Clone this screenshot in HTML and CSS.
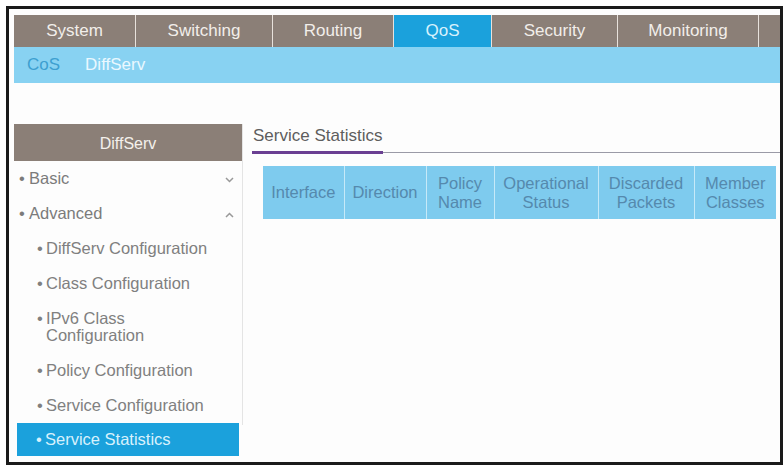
FILE: index.html
```html
<!DOCTYPE html>
<html lang="en">
<head>
    <meta charset="UTF-8">
    <title>QoS - DiffServ - Service Statistics</title>
    <link rel="stylesheet" href="styles.css">
</head>
<body>
    <div class="frame">
        <div class="tabs">
            <div class="tab tab-system">System</div>
            <div class="tab tab-switching">Switching</div>
            <div class="tab tab-routing">Routing</div>
            <div class="tab tab-qos active">QoS</div>
            <div class="tab tab-security">Security</div>
            <div class="tab tab-monitoring">Monitoring</div>
            <div class="tab tab-more"></div>
        </div>
        <div class="subnav">
            <span class="sub-link">CoS</span>
            <span class="sub-link current">DiffServ</span>
        </div>

        <div class="main">
            <div class="sidebar">
                <div class="side-head">DiffServ</div>
                <div class="side-item">
                    <span><span class="dot">&bull;</span>Basic</span>
                    <svg class="chev" width="9" height="6" viewBox="0 0 9 6"><path d="M1 1 L4.5 4.5 L8 1" fill="none" stroke="#999" stroke-width="1.5"/></svg>
                </div>
                <div class="side-item">
                    <span><span class="dot">&bull;</span>Advanced</span>
                    <svg class="chev" width="9" height="6" viewBox="0 0 9 6"><path d="M1 5 L4.5 1.5 L8 5" fill="none" stroke="#999" stroke-width="1.5"/></svg>
                </div>
                <div class="side-item sub"><span class="dot">&bull;</span><span>DiffServ Configuration</span></div>
                <div class="side-item sub"><span class="dot">&bull;</span><span>Class Configuration</span></div>
                <div class="side-item sub two"><span class="dot">&bull;</span><span>IPv6 Class<br>Configuration</span></div>
                <div class="side-item sub"><span class="dot">&bull;</span><span>Policy Configuration</span></div>
                <div class="side-item sub"><span class="dot">&bull;</span><span>Service Configuration</span></div>
                <div class="side-item sub selected"><span class="dot">&bull;</span><span>Service Statistics</span></div>
            </div>

            <div class="content">
                <div class="page-title"><span>Service Statistics</span></div>
                <table class="stats">
                    <thead>
                        <tr>
                            <th class="c-if">Interface</th>
                            <th class="c-dir">Direction</th>
                            <th class="c-pol">Policy<br>Name</th>
                            <th class="c-op">Operational<br>Status</th>
                            <th class="c-dis">Discarded<br>Packets</th>
                            <th class="c-mem">Member<br>Classes</th>
                        </tr>
                    </thead>
                    <tbody></tbody>
                </table>
            </div>
        </div>
    </div>
</body>
</html>
```

FILE: styles.css
```css
body {
    margin: 0;
    background: #fff;
    font-family: 'Liberation Sans', Arial, sans-serif;
    color: #777;
}

.frame {
    box-sizing: border-box;
    width: 777px;
    height: 459px;
    margin: 6px 0 0 6px;
    border: 3px solid #1a1a1a;
    padding: 6px 0 0 5px;
    overflow: hidden;
    background: #fdfdfd;
}

.tabs {
    display: flex;
    height: 32px;
    background: #8b7f77;
}

.tab {
    box-sizing: border-box;
    border-right: 1px solid #e8e2dc;
    color: #f2eeea;
    font-size: 17px;
    line-height: 32px;
    text-align: center;
}

.tab-system { width: 122px; }
.tab-switching { width: 137px; }
.tab-routing { width: 121px; }
.tab-qos { width: 98px; }
.tab-security { width: 126px; }
.tab-monitoring { width: 141px; }
.tab-more { flex: 1; border-right: none; }

.tab.active {
    background: #1ba1dc;
    color: #d8f1fc;
}

.subnav {
    height: 36px;
    background: #88d2f2;
    display: flex;
    align-items: center;
    gap: 25px;
    padding-left: 13px;
    font-size: 17px;
}

.sub-link {
    color: #3d9fd0;
}

.sub-link.current {
    color: #eaf8ff;
}

.main {
    display: flex;
    margin-top: 41px;
}

.sidebar {
    width: 228px;
    height: 301px;
    border-right: 1px solid #e4e4e4;
    flex-shrink: 0;
}

.side-head {
    height: 37px;
    line-height: 40px;
    background: #8b7f77;
    color: #f4f0ec;
    text-align: center;
    font-size: 16px;
}

.side-item {
    display: flex;
    align-items: center;
    justify-content: space-between;
    height: 35px;
    padding: 0 8px 0 5px;
    font-size: 16.5px;
    color: #7b7b7b;
}

.side-item .dot {
    display: inline-block;
    width: 10px;
}

.side-item.sub {
    justify-content: flex-start;
    padding-left: 20px;
    margin: 0 3px;
    color: #808080;
}

.side-item.sub .dot {
    width: 9px;
    align-self: flex-start;
    line-height: 35px;
}

.side-item.two {
    height: 52px;
    align-items: flex-start;
    line-height: 17px;
}

.side-item.two span:last-child {
    padding-top: 9px;
}

.side-item.selected {
    height: 33px;
    background: #1ba1dc;
    color: #d8f1fc;
    padding-left: 19px;
}

.side-item.selected .dot {
    line-height: 33px;
}

.chev {
    margin-top: 2px;
}

.content {
    flex: 1;
    padding-left: 9px;
}

.page-title {
    border-bottom: 1px solid #9a9aa6;
    padding-top: 2px;
}

.page-title span {
    display: inline-block;
    font-size: 17px;
    color: #5e5e5e;
    padding: 0 1px 5px 1px;
    border-bottom: 3px solid #6a3f92;
    margin-bottom: -2px;
}

.stats {
    margin: 13px 0 0 11px;
    width: 513px;
    border-collapse: collapse;
    table-layout: fixed;
}

.stats th {
    box-sizing: border-box;
    height: 53px;
    padding: 0 2px;
    background: #7ecbee;
    border-right: 1px solid #c6e9f8;
    color: #5589ad;
    font-weight: normal;
    font-size: 16.5px;
    line-height: 19px;
    text-align: center;
}

.stats th:last-child {
    border-right: none;
}

.c-if { width: 81px; }
.c-dir { width: 82px; }
.c-pol { width: 68px; }
.c-op { width: 104px; }
.c-dis { width: 96px; }
.c-mem { width: 82px; }
```
